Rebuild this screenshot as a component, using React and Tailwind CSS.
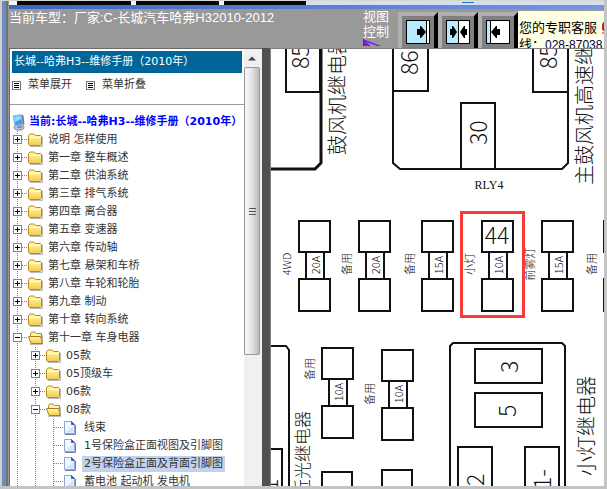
import { useState } from 'react';

const CHAPTERS = [
  { level: 0, type: 'closed', label: '说明 怎样使用' },
  { level: 0, type: 'closed', label: '第一章 整车概述' },
  { level: 0, type: 'closed', label: '第二章 供油系统' },
  { level: 0, type: 'closed', label: '第三章 排气系统' },
  { level: 0, type: 'closed', label: '第四章 离合器' },
  { level: 0, type: 'closed', label: '第五章 变速器' },
  { level: 0, type: 'closed', label: '第六章 传动轴' },
  { level: 0, type: 'closed', label: '第七章 悬架和车桥' },
  { level: 0, type: 'closed', label: '第八章 车轮和轮胎' },
  { level: 0, type: 'closed', label: '第九章 制动' },
  { level: 0, type: 'closed', label: '第十章 转向系统' },
  { level: 0, type: 'open', label: '第十一章 车身电器' },
  { level: 1, type: 'closed', label: '05款' },
  { level: 1, type: 'closed', label: '05顶级车' },
  { level: 1, type: 'closed', label: '06款' },
  { level: 1, type: 'open', label: '08款' },
  { level: 2, type: 'page', label: '线束' },
  { level: 2, type: 'page', label: '1号保险盒正面视图及引脚图' },
  { level: 2, type: 'page', label: '2号保险盒正面及背面引脚图' },
  { level: 2, type: 'page', label: '蓄电池 起动机 发电机' },
];

const FUSES = [
  { x: 299, y: 221, name: '4WD', amp: '20A' },
  { x: 359, y: 221, name: '备用', amp: '20A' },
  { x: 422, y: 221, name: '备用', amp: '15A' },
  { x: 482, y: 221, name: '小灯', amp: '10A' },
  { x: 542, y: 221, name: '前雾灯', amp: '15A' },
  { x: 604, y: 221, name: '备用', amp: '' },
  { x: 322, y: 348, name: '备用', amp: '10A', nameY: 369 },
  { x: 382, y: 350, name: '备用', amp: '10A', nameY: 394 },
];

/* Tree icons */
function Guide() {
  return (
    <svg width="18" height="18" className="shrink-0" aria-hidden="true">
      <path d="M7.5 0V18" stroke="#808080" strokeDasharray="1 1" />
    </svg>
  );
}

function Junction({ type }) {
  return (
    <svg width="18" height="18" className="block shrink-0" aria-hidden="true">
      <path d="M7.5 0V18M8 8.5H18" stroke="#808080" strokeDasharray="1 1" fill="none" />
      {type !== 'page' && (
        <>
          <rect x="3.5" y="4.5" width="8" height="8" fill="#fff" stroke="#808080" />
          <path d={type === 'open' ? 'M5 8.5H10' : 'M5 8.5H10M7.5 6V11'} stroke="#000" />
        </>
      )}
    </svg>
  );
}

function FolderIcon({ open }) {
  return (
    <svg width="16" height="16" viewBox="0 0 16 16" className="shrink-0" aria-hidden="true">
      <defs>
        <linearGradient id="folder" x1="0" y1="0" x2="0" y2="1">
          <stop offset="0" stopColor="#fffbb8" />
          <stop offset="1" stopColor="#f6c948" />
        </linearGradient>
      </defs>
      <path d="M2 14.5H14.5V5" stroke="#b9b9c4" fill="none" />
      {open ? (
        <>
          <path d="M2.5 8V3.5L3.5 2H7L8.5 3.5H13.5V8" fill="#fff3a4" stroke="#b98a24" />
          <path d="M.5 6.5H12.5L14.5 13.5H3z" fill="url(#folder)" stroke="#b07c14" />
        </>
      ) : (
        <>
          <path d="M.5 12.5V3.5L2 2H6L7.5 3.5H12.5L13.5 4.5V12.5L12.5 13.5H1.5z" fill="url(#folder)" stroke="#b98a24" />
          <path d="M1.5 5.5H12.5" stroke="#fffde0" />
        </>
      )}
    </svg>
  );
}

function PageIcon() {
  return (
    <svg width="16" height="16" viewBox="0 0 16 16" className="shrink-0" aria-hidden="true">
      <path d="M.5 1.5H7.5L10.5 4.5V13.5H.5z" fill="#f2f7ff" stroke="#8da5d3" />
      <path d="M2 12L9.5 6V12.5H2z" fill="#d3e2fb" />
      <path d="M7.5 1.5V4.5H10.5z" fill="#3d62ac" stroke="#3d62ac" />
      <path d="M1 14.5H11.5V5" stroke="#6d80b4" fill="none" />
    </svg>
  );
}

function ComputerIcon() {
  return (
    <svg width="15" height="17" viewBox="0 0 15 17" className="shrink-0" aria-hidden="true">
      <ellipse cx="7" cy="13.5" rx="5" ry="2.5" fill="#bfc0da" stroke="#7d7ea8" />
      <path d="M5 10h4l1 4H5z" fill="#8d8eb4" />
      <path d="M1 2L9 .5 11 10 3 12z" fill="#38a0ea" stroke="#a7bfe0" />
      <path d="M2 3L8.5 1.5 9 5 3 8z" fill="#92d8ff" />
      <path d="M9.5 .5l2 1 1 9-1.5 1z" fill="#6a76ae" />
    </svg>
  );
}

function ListIcon() {
  return (
    <svg width="9" height="9" aria-hidden="true">
      <rect x=".5" y=".5" width="8" height="8" fill="#fff" stroke="#777" />
      <path d="M2 2.5H7M2 4.5H7M2 6.5H7" stroke="#000" />
    </svg>
  );
}

function TreeRow({ item, selected, onSelect }) {
  return (
    <li className="flex h-[18px] items-center">
      {Array.from({ length: item.level }, (_, i) => <Guide key={i} />)}
      {item.type === 'page' ? (
        <Junction type="page" />
      ) : (
        <button type="button" aria-label={item.label} className="shrink-0"><Junction type={item.type} /></button>
      )}
      {item.type === 'page' ? <PageIcon /> : <FolderIcon open={item.type === 'open'} />}
      <a
        href="#"
        onClick={() => onSelect(item.label)}
        className={`ml-[2px] whitespace-nowrap px-[2px] leading-4 ${selected ? 'bg-[#c1d2ee]' : ''}`}
      >
        {item.label}
      </a>
    </li>
  );
}

function Sidebar() {
  const [current, setCurrent] = useState('2号保险盒正面及背面引脚图');

  return (
    <aside className="flex w-[253px] shrink-0 border-l border-t border-[#6b6b6b] bg-white font-['DejaVu_Sans','Noto_Sans_CJK_SC',sans-serif] text-[11px] text-[#333]">
      <div className="min-w-0 flex-1 overflow-hidden">
        <h1 className="mx-[2px] mt-[2px] h-[22px] whitespace-nowrap bg-[#006699] px-[2px] leading-[21px] text-white">
          长城--哈弗H3--维修手册（2010年）
        </h1>
        <div className="flex h-[32px] items-center gap-[14px] border-b border-[#999] pb-[6px] pl-[2px]">
          <button type="button" className="flex items-center gap-[7px]"><ListIcon />菜单展开</button>
          <button type="button" className="flex items-center gap-[7px]"><ListIcon />菜单折叠</button>
        </div>
        <div className="flex h-[26px] items-end gap-[2px] whitespace-nowrap pl-[2px]">
          <ComputerIcon />
          <a href="#" className="font-bold leading-[18px] text-[#0000ff]">当前:长城--哈弗H3--维修手册（2010年）</a>
        </div>
        <ul>
          {CHAPTERS.map(item => (
            <TreeRow key={item.label} item={item} selected={item.label === current} onSelect={setCurrent} />
          ))}
        </ul>
      </div>
      {/* Scrollbar */}
      <div className="flex w-[18px] shrink-0 flex-col bg-[#f0f0f0] pr-[2px]">
        <div className="flex h-[18px] items-center justify-center">
          <svg width="8" height="5" aria-hidden="true"><path d="M0 4.5L4 .5 8 4.5z" fill="#444" /></svg>
        </div>
        <div className="flex h-[66%] flex-col items-center justify-center gap-[2px] rounded-xs border border-[#979797] bg-linear-to-r from-[#f8f8f8] via-[#e4e4e4] to-[#b8b8be]">
          <span className="h-px w-[7px] bg-[#555]" />
          <span className="h-px w-[7px] bg-[#555]" />
          <span className="h-px w-[7px] bg-[#555]" />
        </div>
      </div>
    </aside>
  );
}

/* Header */
const VIEWS = [
  { id: 'left', label: '目录', fill: 'M1 1H20V23H1z', bar: 'M20.5 1V23', arrow: 'M11 9h3V6h1l5 6-5 6h-1v-3h-3z' },
  { id: 'both', label: '分栏', fill: 'M1 1H12V23H1z', bar: 'M12.5 1V23', arrow: 'M4 9h2V6h1l4 6-4 6H6v-3H4zM21 9h-2V6h-1l-4 6 4 6h1v-3h2z' },
  { id: 'right', label: '内容', fill: 'M1 1H4V23H1z', bar: 'M4.5 1V23', arrow: 'M14 9h-3V6h-1l-5 6 5 6h1v-3h3z' },
];

function ViewButton({ view }) {
  return (
    <button
      type="button"
      aria-label={view.label}
      className="flex h-[36px] w-[40px] items-center justify-center border-l-4 border-r-4 border-t-4 border-l-[#b0b0b0] border-r-black border-t-[#b0b0b0] bg-[#808080]"
    >
      <svg width="24" height="24" aria-hidden="true">
        <rect x=".5" y=".5" width="23" height="23" fill="#fff" stroke="#000" />
        <path d={view.fill} fill="#b9ebff" />
        <path d={view.bar} stroke="#000" />
        <path d={view.arrow} fill="#000" />
      </svg>
    </button>
  );
}

function Header() {
  return (
    <header className="flex h-[39px] shrink-0 items-start overflow-hidden bg-[#999] font-['Liberation_Sans','Noto_Sans_CJK_SC',sans-serif] text-[13px] text-white">
      <p className="min-w-0 flex-1 overflow-hidden whitespace-nowrap leading-[17px]">当前车型：厂家:C-长城汽车哈弗H32010-2012</p>
      <div className="mr-[9px] w-[26px] shrink-0 leading-[15px]">
        视图控制
        <svg width="18" height="7" className="block" aria-hidden="true">
          <path d="M0 0L18 7H0z" fill="#7a1fd0" />
          <path d="M3 3L14 7H8z" fill="#b98af0" />
          <path d="M0 0V7" stroke="#4c0a8c" />
        </svg>
      </div>
      <div className="mt-[3px] flex shrink-0">
        {VIEWS.map(view => <ViewButton key={view.id} view={view} />)}
      </div>
      <div className="mt-[2px] h-[37px] w-[86px] shrink-0 overflow-hidden bg-[#ffffe5] pl-px pt-[8px] leading-[17px] text-black">
        <div className="flex items-center justify-between">
          您的专职客服
          <svg width="2" height="12" aria-hidden="true"><path d="M2 0Q0 2 0 5T2 9zM0 11H2" fill="#e01010" stroke="#e01010" /></svg>
        </div>
        <div className="whitespace-nowrap">线：<a href="#" className="text-[12px] text-[#000050]">028-87038</a></div>
      </div>
    </header>
  );
}

/* Wiring diagram */
function VText({ x, y, size, anchor = 'start', children }) {
  return (
    <text transform={`translate(${x} ${y}) rotate(-90)`} fontSize={size} textAnchor={anchor} stroke="none" fill="#111">
      {children}
    </text>
  );
}

function Fuse({ fuse }) {
  const { x, y, name, amp, nameY } = fuse;
  return (
    <g>
      <rect x={x} y={y} width="31" height="31" />
      <path d={`M${x + 7} ${y + 31}v27M${x + 25} ${y + 31}v27`} />
      <rect x={x} y={y + 58} width="31" height="32" />
      <VText x={x + 21} y={y + 44} size={11} anchor="middle">{amp}</VText>
      <VText x={x - 8} y={nameY || y + 43} size={11} anchor="middle">{name}</VText>
    </g>
  );
}

function FuseDiagram() {
  return (
    <svg
      width="333"
      height="438"
      viewBox="271 49 333 438"
      role="img"
      aria-label="2号保险盒"
      className="block font-['Noto_Sans_CJK_SC','Liberation_Sans',sans-serif] font-light"
      fill="none"
      stroke="#111"
      strokeWidth="2"
    >
      {/* relays, upper row */}
      <path d="M286 40V92H320V40" />
      <path d="M321 40V163L315 169H271" strokeWidth="3" />
      <path d="M393 40V163L400 169H562L568 163V40" />
      <path d="M428 40V91H393" />
      <path d="M533 40V92H568" />
      <path d="M461 169V103H495V169" />
      <VText x={309} y={69} size={23}>85</VText>
      <VText x={418} y={75} size={23}>86</VText>
      <VText x={557} y={69} size={23}>85</VText>
      <VText x={487} y={145} size={23}>30</VText>
      <text x="489" y="189" fontSize="12" textAnchor="middle" stroke="none" fill="#111" className="font-['Liberation_Serif',serif] font-normal">RLY4</text>
      <VText x={345} y={155} size={20}>鼓风机继电器</VText>
      <VText x={592} y={185} size={20}>主鼓风机高速继电器</VText>

      {FUSES.map(fuse => <Fuse key={`${fuse.x}-${fuse.y}`} fuse={fuse} />)}
      <text x="497" y="244" fontSize="23" textAnchor="middle" stroke="none" fill="#111">44</text>
      <rect x="461.5" y="212.5" width="62" height="104" stroke="#f93a36" strokeWidth="3" />

      {/* relays, lower row */}
      <path d="M271 346H286L289 350V500" />
      <path d="M271 449H282V500" />
      <path d="M322 500V472H352V500M382 500V470H412V500" />
      <path d="M450 500V346L453 343H562L565 346V500" />
      <rect x="475" y="349" width="67" height="34" />
      <rect x="475" y="393" width="67" height="34" />
      <path d="M458 500V447H492V500M525 500V447H559V500" />
      <VText x={518} y={373} size={23}>3</VText>
      <VText x={516} y={417} size={23}>5</VText>
      <VText x={484} y={486} size={23}>2</VText>
      <VText x={551} y={489} size={23}>1-</VText>
      <VText x={278} y={491} size={23}>1</VText>
      <VText x={309} y={496} size={17}>近光继电器</VText>
      <VText x={594} y={476} size={20}>小灯继电器</VText>
    </svg>
  );
}

export default function App() {
  return (
    <div className="flex h-screen flex-col overflow-hidden border-b-[3px] border-r-[3px] border-[#c4c4c4] bg-[#d5d8cf] pt-px">
      <div className="flex min-h-0 flex-1 border-l-2 border-[#d0d0c8]">
        <div className="w-[4px] shrink-0 bg-[#6c8cc8]" />
        <div className="w-[2px] shrink-0 bg-[#707070]" />
        <div className="flex min-w-0 flex-1 flex-col border-l border-[#999]">
          {/* Browser tabs peeking in from above */}
          <div className="flex h-[4px] shrink-0 gap-[5px] bg-[#f4f4f4] pl-[8px]">
            <div className="w-[114px] bg-[#05070c]" />
            <div className="w-[83px] bg-[#05070c]" />
            <div className="w-[82px] bg-[#05070c]" />
            <div className="-ml-[5px] flex-1 bg-[#d5def4] pl-[156px] pt-px">
              <div className="h-px w-[12px] bg-[#1873d3]" />
            </div>
          </div>
          <div className="h-[4px] shrink-0 bg-linear-to-r from-[#3f66bd] to-[#7596de]" />
          <Header />
          <div className="flex min-h-0 flex-1">
            <Sidebar />
            <div className="w-[8px] shrink-0 bg-[#505050]" />
            <main className="min-w-0 flex-1 overflow-hidden border-l border-t border-[#808080] bg-white">
              <FuseDiagram />
            </main>
          </div>
        </div>
      </div>
    </div>
  );
}
